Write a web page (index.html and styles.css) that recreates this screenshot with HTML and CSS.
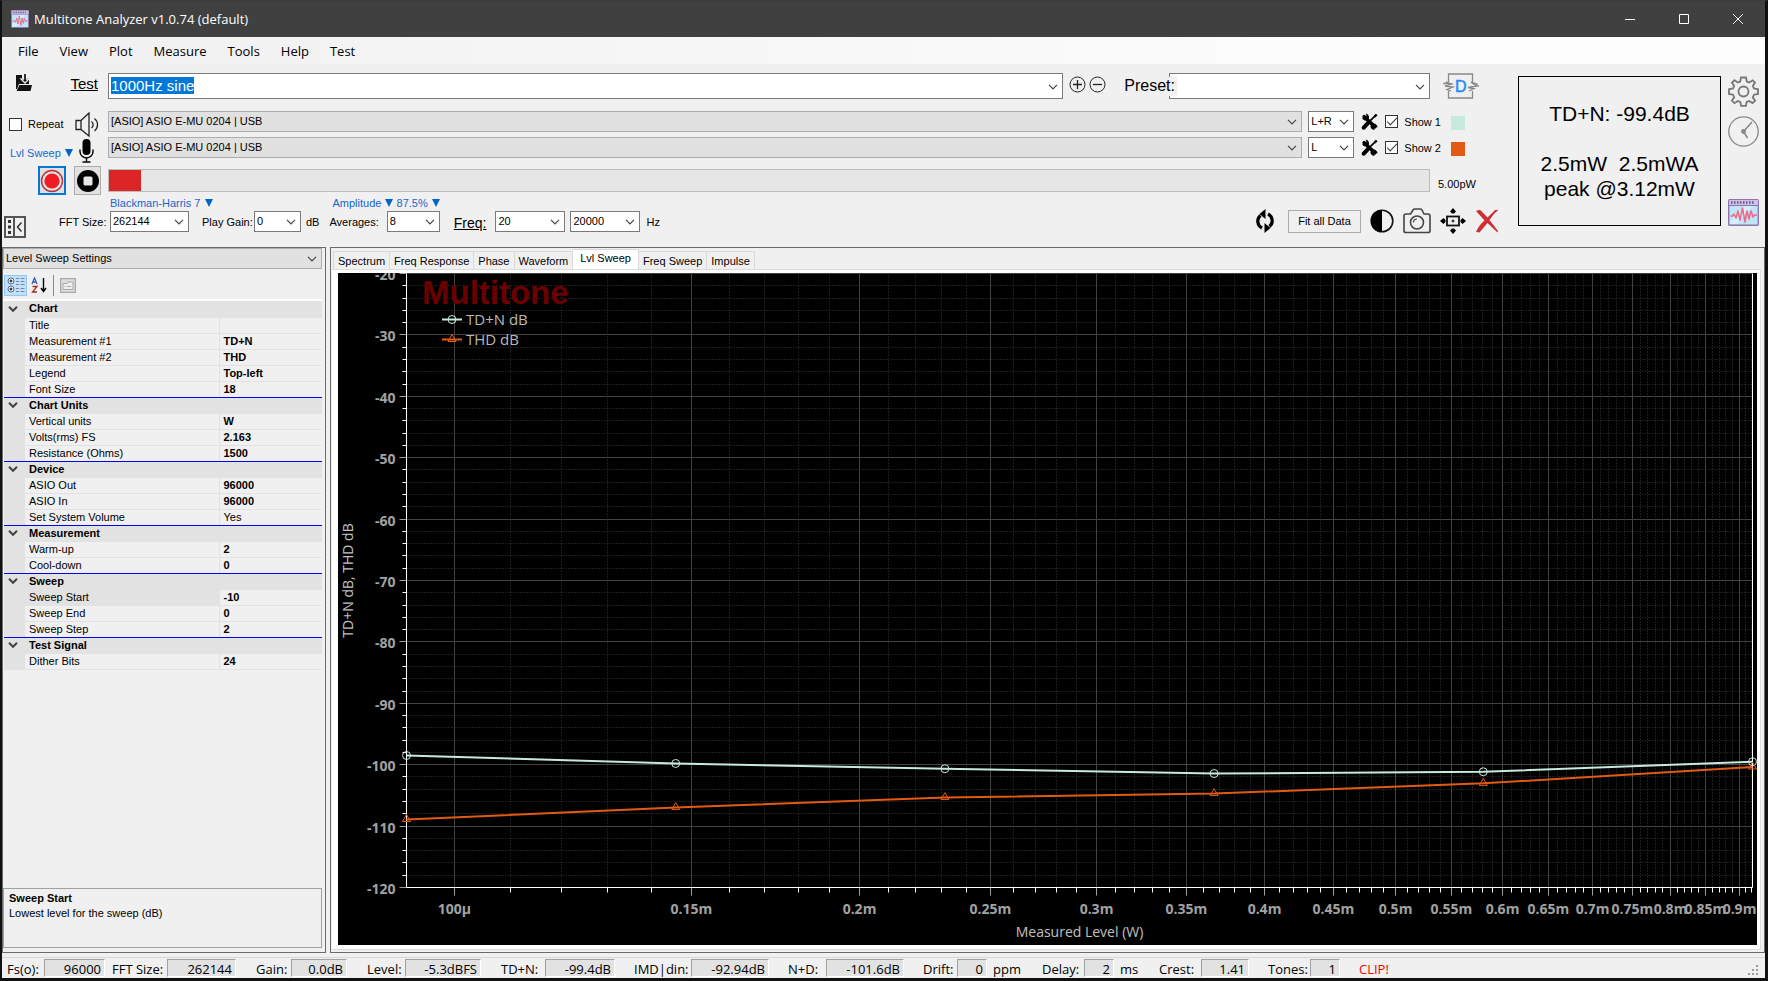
FILE: index.html
```html
<!DOCTYPE html>
<html lang="en">
<head>
<meta charset="utf-8">
<title>Multitone Analyzer v1.0.74 (default)</title>
<link rel="stylesheet" href="styles.css">
</head>
<body>
<svg width="0" height="0" class="defs">
  <symbol id="chev" viewBox="0 0 10 6"><path d="M1 .8 5 4.8 9 .8" fill="none" stroke="#444" stroke-width="1.2"/></symbol>
  <symbol id="chevb" viewBox="0 0 10 6"><path d="M1 .8 5 4.8 9 .8" fill="none" stroke="#444" stroke-width="2"/></symbol>
  <symbol id="tools" viewBox="0 0 16 16"><path d="M3 3.5 13 13" stroke="#000" stroke-width="3.4" stroke-linecap="round"/><path d="M1 4.500a3.600 3.600 0 0 0 6 1.500A3.600 3.600 0 0 0 4.500.5L5.200 3 3 4.800Z" fill="#000"/><path d="M11 10.200a3.400 3.400 0 0 1 4.500 3.500l-2.300-1-1.200 1.200 1 1.900a3.400 3.400 0 0 1-4-4Z" fill="#000"/><path d="M14.500 1.500 8.500 7.500" stroke="#000" stroke-width="1.600"/><path d="M14 .6 15.500 2 13.500 4.200 12 2.600Z" fill="#000"/><path d="M6.500 9.500 2.600 13.800" stroke="#000" stroke-width="3.800" stroke-linecap="round"/></symbol>
  <symbol id="scope" viewBox="0 0 31 27"><rect x=".7" y=".7" width="29.600" height="25.600" rx="1" fill="#bfe3f7" stroke="#8d76ab" stroke-width="1.400"/><path d="M2 22 18 6h7L9 25H2Z" fill="#d5eefb"/><path d="M1 1h29v5.500H1Z" fill="#cfc0e6"/><path d="M1 6.500h29" stroke="#8d76ab"/><path d="M3 3.500h24" stroke="#6c568f" stroke-width="2.400" stroke-dasharray="1.500 1.500"/><path d="M2.500 17h2l1.500-2 2 4 2-7 2 9 2.500-12 2.500 14 2-11 2 8 2-8 2 6 1.500-2H29" fill="none" stroke="#ea6a88" stroke-width="1.500" stroke-linejoin="round"/></symbol>
</svg>
<div class="window">
  <header class="titlebar">
    <svg class="appicon" viewBox="0 0 31 27" preserveAspectRatio="none"><use href="#scope"/></svg>
    <h1>Multitone Analyzer v1.0.74 (default)</h1>
    <button aria-label="Minimize"><svg width="10" height="10"><path d="M0 5.500h10" stroke="#fff"/></svg></button>
    <button aria-label="Maximize"><svg width="10" height="10"><path d="M.5.5h9v9h-9z" stroke="#fff" fill="none"/></svg></button>
    <button aria-label="Close"><svg width="10" height="10"><path d="M0 0 10 10M10 0 0 10" stroke="#fff"/></svg></button>
  </header>
  <nav class="menu">
    <button>File</button><button>View</button><button>Plot</button><button>Measure</button><button>Tools</button><button>Help</button><button>Test</button>
  </nav>

  <section class="toolbar">
    <div class="main">
      <div class="io">
        <div class="leftcol">
          <div class="l1">
            <button class="bare" aria-label="Open"><svg width="18" height="18" viewBox="0 0 18 18"><path d="M1 1h6v3h7v6H4l-2 5H1Z" fill="#111"/><path d="M4.500 11H17l-1.500 6H1.500Z" fill="#111"/><path d="M8.500 0v5H6l4 4 4-4h-2.500V0" fill="#111" stroke="#f0f0f0" stroke-width="1.300"/></svg></button>
            <a href="#test">Test</a>
          </div>
          <div class="l2">
            <label class="chk"><input type="checkbox"><span>Repeat</span></label>
            <svg width="25" height="25" viewBox="0 0 25 25" fill="none" stroke="#222" stroke-width="1.300"><path d="M1 8.500h5v9H1ZM6 8.500 14 1v23L6 17.500"/><path d="M16.500 9.500a4 4 0 0 1 0 6.500M19.500 6.500a8 8 0 0 1 0 12.500"/></svg>
          </div>
          <div class="l3">
            <button class="drop">Lvl Sweep <i></i></button>
            <svg width="15" height="24" viewBox="0 0 15 24"><rect x="3.500" y="0" width="8" height="16" rx="4"/><path d="M1 10.500v2a6.500 6.500 0 0 0 13 0v-2M7.500 19v4M3.500 23h8" fill="none" stroke="#000" stroke-width="1.400"/></svg>
          </div>
          <div class="l4">
            <button class="rec on" aria-label="Record"><svg width="24" height="24" viewBox="0 0 24 24"><circle cx="12" cy="12" r="10.500" fill="none" stroke="#b5333a" stroke-width="1.400"/><circle cx="12" cy="12" r="7.600" fill="#f01c22"/></svg></button>
            <button class="rec" aria-label="Stop"><svg width="24" height="24" viewBox="0 0 24 24"><circle cx="12" cy="12" r="11"/><rect x="7.500" y="7.500" width="9" height="9" rx="1.500" fill="#e8e8e8"/></svg></button>
          </div>
        </div>
        <div class="rightcol">
          <div class="r1">
            <span class="combo big grow"><input id="test" type="text" value="1000Hz sine" aria-label="Test"><svg><use href="#chev"/></svg></span>
            <button class="bare" aria-label="Add"><svg width="17" height="17" viewBox="0 0 17 17" fill="none" stroke="#222"><circle cx="8.500" cy="8.500" r="7.500"/><path d="M4 8.500h9M8.500 4v9" stroke-width="1.300"/></svg></button>
            <button class="bare" aria-label="Remove"><svg width="17" height="17" viewBox="0 0 17 17" fill="none" stroke="#222"><circle cx="8.500" cy="8.500" r="7.500"/><path d="M4 8.500h9" stroke-width="1.300"/></svg></button>
            <label class="preset" for="preset">Preset:</label>
            <span class="combo big wpreset"><select id="preset"><option></option></select><svg><use href="#chev"/></svg></span>
            <button class="bare dicon" aria-label="Distortion"><svg width="36" height="26" viewBox="0 0 36 26" fill="none" stroke="#888" stroke-width="1.300"><path d="M5.500 9V1h24v8M5.500 18v7h24v-7"/><path d="M0 10.500h5l-2-1.500 6 2-7 2 8 1-6 2.500 4 1.500M36 13h-4l2-2-6-2 5 4-8 1.500 6 1-5 2.500"/><text x="12" y="19" font-family="Liberation Sans" font-size="16" fill="#1e8bff" stroke="#1e8bff" stroke-width=".5">D</text></svg></button>
          </div>
          <div class="r2">
            <span class="combo grey grow"><select aria-label="Output device"><option>[ASIO] ASIO E-MU 0204 | USB</option></select><svg><use href="#chev"/></svg></span>
            <span class="combo w46"><select aria-label="Output channel"><option>L+R</option></select><svg><use href="#chev"/></svg></span>
            <button class="bare" aria-label="Output setup"><svg width="17" height="17"><use href="#tools"/></svg></button>
            <label class="chk"><input type="checkbox" checked><span>Show 1</span></label><span class="sw one"></span>
          </div>
          <div class="r2">
            <span class="combo grey grow"><select aria-label="Input device"><option>[ASIO] ASIO E-MU 0204 | USB</option></select><svg><use href="#chev"/></svg></span>
            <span class="combo w46"><select aria-label="Input channel"><option>L</option></select><svg><use href="#chev"/></svg></span>
            <button class="bare" aria-label="Input setup"><svg width="17" height="17"><use href="#tools"/></svg></button>
            <label class="chk"><input type="checkbox" checked><span>Show 2</span></label><span class="sw two"></span>
          </div>
          <div class="r4"><div class="meter"><div></div></div><span>5.00pW</span></div>
        </div>
      </div>
      <div class="fft">
        <button class="bare toggle" aria-label="Toggle panel"><svg width="22" height="22" viewBox="0 0 22 22" fill="none" stroke="#555" stroke-width="2"><path d="M1 1h20v20H1ZM10 1v20"/><path d="M5.500 4v14" stroke="#333" stroke-width="3" stroke-dasharray="3 2.500"/><path d="M17.500 6.500 13.500 11l4 4.500" stroke="#333" stroke-width="1.500"/></svg></button>
        <label for="size" class="lsize">FFT Size:</label>
        <div class="stack w79"><button class="drop">Blackman-Harris 7 <i></i></button><span class="combo w79"><select id="size"><option>262144</option></select><svg><use href="#chev"/></svg></span></div>
        <label for="gain" class="lgain">Play Gain:</label>
        <span class="combo w47"><select id="gain"><option>0</option></select><svg><use href="#chev"/></svg></span>
        <span class="db">dB</span>
        <div class="stack right"><div><button class="drop">Amplitude <i></i></button> <button class="drop">87.5% <i></i></button></div>
          <div class="avg"><label for="avg">Averages:</label><span class="combo w53"><select id="avg"><option>8</option></select><svg><use href="#chev"/></svg></span></div></div>
        <a href="#freq" class="freq">Freq:</a>
        <span class="combo w70"><select id="freq" aria-label="From"><option>20</option></select><svg><use href="#chev"/></svg></span>
        <span class="combo w70"><select aria-label="To"><option>20000</option></select><svg><use href="#chev"/></svg></span>
        <span class="hz">Hz</span>
        <div class="actions">
          <button class="bare" aria-label="Refresh"><svg width="20" height="24" viewBox="0 0 20 24" fill="none" stroke="#000" stroke-width="3.200"><path d="M7 19A7.500 7.500 0 0 1 5.500 6.500M13 5a7.500 7.500 0 0 1 1.500 12.500"/><path d="M10.500 0v10L4.500 5ZM9.500 14v10l6-5Z" fill="#000" stroke="none"/></svg></button>
          <button class="fit">Fit all Data</button>
          <button class="bare" aria-label="Contrast"><svg width="24" height="24" viewBox="0 0 24 24"><circle cx="12" cy="12" r="10.800" fill="none" stroke="#111" stroke-width="1.600"/><path d="M12 1a11 11 0 0 0 0 22Z"/></svg></button>
          <button class="bare" aria-label="Screenshot"><svg width="28" height="26" viewBox="0 0 28 26" fill="none" stroke="#444" stroke-width="1.600"><path d="M1 8q0-2 2-2h4.500L10 2q.5-1 2-1h5q1.500 0 2 1l2 4h4q2 0 2 2v15q0 1.500-2 1.500H3q-2 0-2-1.500Z"/><circle cx="14" cy="14.500" r="6.500"/><path d="M10.500 14.500a3.500 3.500 0 0 1 3.500-3.500" stroke-width="1.200"/></svg></button>
          <button class="bare" aria-label="Move"><svg width="26" height="26" viewBox="0 0 26 26"><rect x="7" y="8.500" width="12" height="9" fill="none" stroke="#111" stroke-width="1.800"/><path d="M13 0 16 3.500 14 5.500h-2L10 3.500ZM13 26l3-3.500-2-2h-2l-2 2ZM0 13l3.500-3 2 2v2l-2 2ZM26 13l-3.500-3-2 2v2l2 2ZM11.500 12.500h3v1h-3ZM12.500 11.500h1v3h-1Z"/></svg></button>
          <button class="bare" aria-label="Delete"><svg width="24" height="24" viewBox="0 0 24 24"><path d="M1 2 5 .8 12.500 8.500 20 1 23.500.8Q18 5 14.500 11L23 22l-.5 1.500L12.500 14 4.500 23.500 1 23Q4 16 9.500 11.500Z" fill="#cf2f33"/></svg></button>
        </div>
      </div>
    </div>
    <output class="readout"><span>TD+N: -99.4dB</span><span>&nbsp;</span><span>2.5mW&nbsp; 2.5mWA</span><span>peak @3.12mW</span></output>
    <div class="side">
      <button class="bare" aria-label="Settings"><svg id="gear" width="31" height="31" viewBox="0 0 31 31" fill="none" stroke="#777" stroke-width="1.800"><path d="M13 1.500h5l.8 4 2.500 1L24.700 4.300 27 6.600 24.800 10l1.200 2.500 4 .8v4.600l-4 .8-1.200 2.600 2.300 3.400-2.600 2.400-3.400-2.200-2.400 1-.8 4h-4.800l-.8-4-2.500-1-3.400 2.300-2.500-2.500L6.200 21.300 5 18.700l-4-.8v-4.600l4-.8L6.200 10 4 6.600l2.400-2.400 3.400 2.300 2.400-1Z"/><circle cx="15.500" cy="15.500" r="5"/></svg></button>
      <button class="bare" aria-label="History"><svg width="31" height="31" viewBox="0 0 31 31" fill="none" stroke="#888" stroke-width="1.300"><circle cx="15.500" cy="15.500" r="14.700"/><path d="M24 6 15.500 15.500 19.500 22" stroke-width="1.600"/><circle cx="15.500" cy="15.500" r="1.800" fill="#888"/></svg></button>
      <button class="bare last" aria-label="Scope"><svg width="31" height="27"><use href="#scope"/></svg></button>
    </div>
  </section>

  <main class="panes">
    <aside class="props">
      <span class="combo grey full"><select aria-label="Settings page"><option>Level Sweep Settings</option></select><svg><use href="#chev"/></svg></span>
      <div class="ptools">
        <button class="pt on" aria-label="Categorized"><svg width="18" height="16" viewBox="0 0 18 16"><g fill="#fff" stroke="#456a9c"><circle cx="4" cy="4" r="3"/><circle cx="4" cy="12" r="3"/></g><path d="M2.500 4h3M4 2.500v3M2.500 12h3M4 10.500v3" stroke="#000"/><path d="M9 1.500h3M9 4.500h3M9 7.500h3M9 11.500h3M9 14.500h3M13.500 1.500h4M13.500 4.500h4M13.500 7.500h4M13.500 11.500h4M13.500 14.500h4" stroke="#7287ad"/></svg></button>
        <button class="pt" aria-label="Alphabetical"><svg width="16" height="16" viewBox="0 0 16 16" fill="none"><path d="M1 7 3.500 1 6 7M2 5h3" stroke="#3459b5" stroke-width="1.300"/><path d="M1.500 9.500h4.500L1.500 15H6" stroke="#a82a2a" stroke-width="1.300"/><path d="M12.500 1v13M10 11l2.500 3.500L15 11" stroke="#000" stroke-width="1.400"/></svg></button>
        <span class="sep"></span>
        <button class="pt" aria-label="Property pages" disabled><svg width="16" height="15" viewBox="0 0 16 15" fill="none" stroke="#aaa"><rect x=".5" y=".5" width="15" height="14" fill="#ddd" stroke-width="1.500"/><path d="M3 5.500h4l1-1.500h5v7.500H3ZM4.500 8.500h1M7 8.500h4" fill="#eee"/></svg></button>
      </div>
      <div class="gridwrap">
        <table class="grid">
          <colgroup><col class="c1"><col class="c2"><col></colgroup>
          <tbody>
          <tr class="cat"><td><svg><use href="#chevb"/></svg></td><th colspan="2">Chart</th></tr>
          <tr><td></td><td>Title</td><td></td></tr>
          <tr><td></td><td>Measurement #1</td><td>TD+N</td></tr>
          <tr><td></td><td>Measurement #2</td><td>THD</td></tr>
          <tr><td></td><td>Legend</td><td>Top-left</td></tr>
          <tr><td></td><td>Font Size</td><td>18</td></tr>
          <tr class="cat"><td><svg><use href="#chevb"/></svg></td><th colspan="2">Chart Units</th></tr>
          <tr><td></td><td>Vertical units</td><td>W</td></tr>
          <tr><td></td><td>Volts(rms) FS</td><td>2.163</td></tr>
          <tr><td></td><td>Resistance (Ohms)</td><td>1500</td></tr>
          <tr class="cat"><td><svg><use href="#chevb"/></svg></td><th colspan="2">Device</th></tr>
          <tr><td></td><td>ASIO Out</td><td>96000</td></tr>
          <tr><td></td><td>ASIO In</td><td>96000</td></tr>
          <tr><td></td><td>Set System Volume</td><td class="def">Yes</td></tr>
          <tr class="cat"><td><svg><use href="#chevb"/></svg></td><th colspan="2">Measurement</th></tr>
          <tr><td></td><td>Warm-up</td><td>2</td></tr>
          <tr><td></td><td>Cool-down</td><td>0</td></tr>
          <tr class="cat"><td><svg><use href="#chevb"/></svg></td><th colspan="2">Sweep</th></tr>
          <tr class="sel"><td></td><td>Sweep Start</td><td>-10</td></tr>
          <tr><td></td><td>Sweep End</td><td>0</td></tr>
          <tr><td></td><td>Sweep Step</td><td>2</td></tr>
          <tr class="cat"><td><svg><use href="#chevb"/></svg></td><th colspan="2">Test Signal</th></tr>
          <tr><td></td><td>Dither Bits</td><td>24</td></tr>
          </tbody>
        </table>
      </div>
      <div class="help"><strong>Sweep Start</strong><p>Lowest level for the sweep (dB)</p></div>
    </aside>
    <section class="view">
      <div class="tabs" role="tablist">
        <button role="tab">Spectrum</button><button role="tab">Freq Response</button><button role="tab">Phase</button><button role="tab">Waveform</button><button role="tab" class="active">Lvl Sweep</button><button role="tab">Freq Sweep</button><button role="tab">Impulse</button>
      </div>
      <div class="page"><div class="plot"><svg id="chart"></svg></div></div>
    </section>
  </main>

  <footer class="status">
    <span class="f1">Fs(o):</span><output class="w61">96000</output>
    <span class="f2">FFT Size:</span><output class="w69">262144</output>
    <span class="f3">Gain:</span><output class="w56">0.0dB</output>
    <span class="f4">Level:</span><output class="w76">-5.3dBFS</output>
    <span class="f5">TD+N:</span><output class="w70">-99.4dB</output>
    <span class="f6 n57">IMD|din:</span><output class="w78">-92.94dB</output>
    <span class="f6 n38">N+D:</span><output class="w78">-101.6dB</output>
    <span class="f6 n34">Drift:</span><output class="w30">0</output><span class="unit n30">ppm</span>
    <span class="f6 n42">Delay:</span><output class="w30">2</output><span class="unit n20">ms</span>
    <span class="f6 n42">Crest:</span><output class="w48">1.41</output>
    <span class="f6 n42">Tones:</span><output class="w30">1</output>
    <span class="clip">CLIP!</span>
    <svg class="grip" width="12" height="12" fill="#999"><path d="M8 0h2v2H8zM8 4h2v2H8zM8 8h2v2H8zM4 4h2v2H4zM4 8h2v2H4zM0 8h2v2H0z"/></svg>
  </footer>
</div>
<script src="chart.js"></script>
</body>
</html>
```
FILE: styles.css
```css
* { box-sizing: border-box; }
body { margin: 0; background: #0c0c0e; color: #000; font: 11px/14px "Liberation Sans", sans-serif; }
.defs { position: absolute; }
svg { display: block; flex: none; }
button, input, select { font: inherit; color: inherit; margin: 0; }
a { color: inherit; }
.window { min-height: 100vh; display: flex; flex-direction: column; background: #f0f0f0; border: 1px solid #3c3c3c; border-width: 1px 3px 3px 2px; border-color: #3c3c3c #111 #111 #111; }

.titlebar { height: 36px; background: #404040; color: #fff; display: flex; align-items: center; padding-left: 9px; }
.appicon { width: 18px; height: 18px; }
.titlebar h1 { flex: 1; margin: 0 0 0 5px; font: 13px/20px "Open Sans", sans-serif; }
.titlebar button { width: 54px; height: 36px; border: 0; background: none; display: flex; align-items: center; justify-content: center; padding: 0; }

.menu { height: 27px; display: flex; align-items: center; gap: 1px; padding-left: 6px; background: linear-gradient(90deg, #f0f0f0, #fdfdfd 80%); }
.menu button { border: 0; background: none; padding: 0 10px; font: 13px/20px "Open Sans", sans-serif; }

.toolbar { height: 183px; display: flex; }
.main { flex: 1; min-width: 0; display: flex; flex-direction: column; }
.bare { border: 0; background: none; padding: 0; display: flex; }
.io { display: flex; padding: 9px 18px 0 0; }
.leftcol { width: 106px; flex: none; display: flex; flex-direction: column; }
.l1 { height: 26px; display: flex; justify-content: space-between; padding: 1px 10px 0 13px; }
.l1 a { font-size: 15px; line-height: 20px; }
.l2 { height: 38px; display: flex; align-items: flex-end; justify-content: space-between; padding: 0 8px 0 7px; }
.l2 .chk { padding-bottom: 6px; }
.l3 { height: 26px; display: flex; align-items: center; justify-content: space-between; padding: 1px 14px 0 8px; }
.l3 .drop { padding-top: 4px; }
.l4 { height: 32px; display: flex; gap: 8px; padding: 3px 0 0 36px; }
.rec { width: 27px; height: 29px; border: 1px solid #adadad; background: #e1e1e1; padding: 0; display: flex; align-items: center; justify-content: center; }
.rec.on { border: 2px solid #0078d7; width: 28px; }
.drop { border: 0; background: none; padding: 0; color: #1a66cc; line-height: 14px; white-space: nowrap; }
.drop i { display: inline-block; border: 4px solid transparent; border-top: 8px solid #0066cc; border-bottom: 0; margin-left: 1px; }
.chk { display: flex; align-items: center; gap: 6px; white-space: nowrap; }
.chk input { appearance: none; width: 13px; height: 13px; border: 1px solid #333; background: #fff; display: grid; place-items: center; }
.chk input:checked::after { content: ""; width: 9px; height: 4px; border: solid #333; border-width: 0 0 1px 1px; transform: rotate(-45deg) translate(1px, -1px); }

.rightcol { flex: 1; min-width: 0; display: flex; flex-direction: column; }
.combo { position: relative; display: flex; height: 21px; flex: none; }
.combo select, .combo input { appearance: none; flex: 1; min-width: 0; width: 100%; border: 1px solid #7a7a7a; border-radius: 0; background: #fff; padding: 0 2px 1px; outline: none; }
.combo svg { position: absolute; right: 5px; top: 8px; width: 10px; height: 6px; pointer-events: none; }
.combo.grey select { background: #e1e1e1; border-color: #adadad; }
.combo.big { height: 26px; font-size: 15px; }
.combo.big svg { top: 11px; }
.combo.grow { flex: 1; min-width: 0; }
.combo input::selection { background: #0078d7; color: #fff; }
.wpreset { width: 261px; }
.w46 { width: 46px; } .w47 { width: 47px; } .w53 { width: 53px; } .w70 { width: 70px; } .w79 { width: 79px; }
.r1 { display: flex; height: 26px; margin-bottom: 12px; }
.r1 > .bare:not(.dicon) { padding: 3px 0 0 3px; }
.r1 > .grow + .bare { margin-left: 3px; }
.preset { z-index: 1; font-size: 16px; line-height: 18px; height: 19px; background: #f0f0f0; margin: 4px -8px 0 18px; padding-right: 2px; }
.dicon { margin-left: 13px; width: 57px; }
.r2 { display: flex; align-items: center; gap: 6px; height: 21px; margin-bottom: 5px; }
.r2 .bare { margin: 0 1px; }
.sw { width: 14px; height: 14px; margin: 3px 35px 0 4px; }
.one { background: #c6eadf; } .two { background: #e25a14; }
.r4 { display: flex; height: 23px; margin-top: 6px; align-items: flex-end; }
.meter { flex: 1; height: 23px; border: 1px solid #bcbcbc; background: #e6e6e6; }
.meter div { width: 32px; height: 21px; background: #dc2626; }
.r4 span { width: 70px; padding-left: 8px; line-height: 16px; }

.fft { display: flex; align-items: flex-end; height: 44px; padding-left: 2px; }
.fft > .toggle { margin-bottom: 1px; }
.fft .combo { margin-bottom: 7px; }
.fft > label, .fft > span:not(.combo), .avg label { line-height: 14px; margin-bottom: 10px; white-space: nowrap; }
.toggle { width: 24px; }
.lsize { width: 51px; margin-left: 31px; }
.stack { display: flex; flex-direction: column; align-items: flex-start; flex: none; }
.stack .drop { margin-bottom: 1px; }
.stack.right { align-items: flex-end; }
.lgain { width: 52px; margin-left: 13px; }
.db { margin: 0 10px 0 5px; }
.avg { display: flex; align-items: flex-end; gap: 8px; }
.freq { font-size: 14px; line-height: 18px; margin: 0 9px 7px 14px; }
.w70 + .w70 { margin-left: 5px; }
.hz { margin-left: 6px; }
.actions { margin-left: auto; display: flex; align-items: center; gap: 9px; height: 26px; padding-right: 19px; margin-bottom: 5px; }
.fit { width: 73px; height: 23px; border: 1px solid #adadad; background: #f0f0f0; padding: 0; margin-left: 4px; }
.readout { width: 203px; height: 150px; margin-top: 12px; border: 1px solid #000; display: flex; flex-direction: column; align-items: center; justify-content: center; font-size: 21px; line-height: 25px; flex: none; }
.side { width: 44px; flex: none; padding: 12px 0 0 7px; display: flex; flex-direction: column; gap: 9px; }
.side .last { margin-top: 43px; }

.panes { flex: 1; display: flex; gap: 4px; min-height: 0; }
.props { width: 324px; flex: none; border: 1px solid #6a6a6a; display: flex; flex-direction: column; padding: 0 3px 4px 0; }
.full { width: 100%; }
.ptools { height: 32px; display: flex; align-items: center; padding: 2px 0 0 1px; border-bottom: 2px solid #fff; }
.pt { border: 1px solid transparent; background: none; width: 23px; height: 21px; padding: 0; display: grid; place-items: center; }
.pt.on { background: #c4e0f7; border-color: #90c8f6; }
.sep { width: 1px; height: 21px; background: #888; margin: 0 2px 0 3px; }
.gridwrap { flex: 1; padding-left: 1px; }
.grid { width: 100%; border-collapse: collapse; table-layout: fixed; line-height: 15px; }
.c1 { width: 21px; } .c2 { width: 194px; }
.grid td, .grid th { padding: 0 0 0 4px; height: 16px; text-align: left; white-space: nowrap; border: 0 solid #e2e2e2; border-bottom-width: 1px; }
.grid td:first-child { background: #e2e2e2; }
.grid td:nth-child(3) { border-left-width: 1px; font-weight: bold; }
.grid th { background: #e2e2e2; }
.grid tr:has(+ .cat) > * { border-bottom-color: #0000f0; }
.grid td.def { font-weight: normal; }
.grid .sel td:nth-child(2) { background: #e2e2e2; }
.grid svg { width: 10px; height: 6px; }
.help { height: 60px; border: 1px solid #a0a0a0; padding: 2px 5px; line-height: 15px; }
.help p { margin: 0; }

.view { flex: 1; min-width: 0; border: 1px solid #6a6a6a; display: flex; flex-direction: column; padding: 1px 3px 2px 1px; }
.tabs { height: 20px; display: flex; align-items: flex-end; padding-left: 1px; }
.tabs button { height: 18px; border: 1px solid #d9d9d9; border-bottom: 0; border-left-width: 0; background: #f0f0f0; padding: 0 4px; line-height: 16px; white-space: nowrap; }
.tabs button:first-child { border-left-width: 1px; }
.tabs .active { height: 20px; background: #fff; padding: 0 7px 3px; }
.page { flex: 1; background: #fff; border: 1px solid #dcdcdc; border-left: 0; padding: 3px 3px 4px 6px; display: flex; min-height: 0; }
.plot { flex: 1; min-width: 0; background: #000; overflow: hidden; position: relative; }
#chart { position: absolute; inset: 0; width: 100%; height: 100%; font-family: "Open Sans", sans-serif; }
.major { stroke: #424242; } .minor { stroke: #3a3a3a; stroke-dasharray: 1 2; }
.axis { stroke: #fff; fill: none; } .gtick { stroke: #a0a0a0; }
.tick { fill: #a2a2a2; font-size: 14px; font-weight: bold; }
.name { fill: #c0c0c0; font-size: 14px; }
.leg { fill: #b8b8b8; font-size: 15px; }
.brand { fill: #6a0000; font: bold 33px "Liberation Sans", sans-serif; }
.s0 { stroke: #c6eadf; } .s1 { stroke: #e25a14; }
.line { fill: none; stroke-width: 2; } .mark { fill: none; stroke-width: 1; }

.status { height: 21px; display: flex; align-items: flex-start; margin-top: 4px; border-top: 1px solid #d8d8d8; padding: 1px 5px 0; font: 13px/18px "Open Sans", sans-serif; white-space: nowrap; }
.status span { flex: none; padding-top: 1px; height: 18px; }
.status output { height: 18px; flex: none; border: 1px solid #a0a0a0; border-color: #a0a0a0 #fff #fff #a0a0a0; background: #e2e2e2; text-align: right; padding: 0 3px; }
.f1 { width: 37px; } .f2 { width: 55px; margin-left: 7px; } .f3 { width: 35px; margin-left: 20px; } .f4 { width: 38px; margin-left: 20px; } .f5 { width: 44px; margin-left: 20px; }
.f6 { margin-left: 19px; }
.n20 { width: 20px; } .n30 { width: 30px; } .n34 { width: 34px; } .n38 { width: 38px; } .n42 { width: 42px; } .n57 { width: 57px; }
.w30 { width: 30px; } .w48 { width: 48px; } .w56 { width: 56px; } .w61 { width: 61px; } .w69 { width: 69px; } .w76 { width: 76px; } .w78 { width: 78px; }
.unit { margin-left: 6px; }
.clip { color: #f00; margin-left: 19px; }
.grip { margin: 6px 0 0 auto; }
```
FILE: chart.js
```js
const svg = document.getElementById('chart');
const levels = [0.0921, 0.14597, 0.23134, 0.36665, 0.58110, 0.92099];
const series = [
  { name: 'TD+N dB', y: [-98.5, -99.8, -100.66, -101.44, -101.15, -99.52] },
  { name: 'THD dB', y: [-108.93, -106.98, -105.35, -104.7, -103.04, -100.38] }
];

function mark(i, x, y) {
  return i === 0
    ? `<circle class="mark s0" cx="${x}" cy="${y}" r="4"/>`
    : `<path class="mark s1" d="M${x - 4} ${y + 2}L${x} ${y - 5}L${x + 4} ${y + 2}Z"/>`;
}

function draw() {
  const w = svg.clientWidth, h = svg.clientHeight;
  const L = 68.5, R = w - 4.5, T = 0.5, B = h - 57.5;
  const lo = Math.log(levels[0]), hi = Math.log(levels[5]);
  const X = v => L + (Math.log(v) - lo) / (hi - lo) * (R - L);
  const Y = v => T + (-20 - v) / 100 * (B - T);
  const snap = v => Math.floor(v) + 0.5;
  let grid = '', over = '';
  for (let v = -20; v >= -120; v -= 2) {
    const y = snap(Y(v)), major = v % 10 === 0;
    if (v > -120) grid += `<path class="${major ? 'major' : 'minor'}" d="M${L} ${y}H${R}"/>`;
    over += `<path class="${major ? 'gtick' : 'axis'}" d="M${L - (major ? 7 : 4)} ${y}H${L}"/>`;
    if (major) over += `<text class="tick" text-anchor="end" x="${L - 11}" y="${y + 6}">${v}</text>`;
  }
  for (let k = 10; k <= 92; k++) {
    const x = snap(X(k / 100)), major = k % 5 === 0;
    grid += `<path class="${major ? 'major' : 'minor'}" d="M${x} ${T}V${B}"/>`;
    over += `<path class="${major ? 'gtick' : 'axis'}" d="M${x} ${B}v${major ? 8 : 5}"/>`;
    if (major) over += `<text class="tick" text-anchor="middle" x="${x}" y="${B + 26}">${k === 10 ? '100µ' : k / 100 + 'm'}</text>`;
  }
  over += `<path class="axis" d="M${L} ${T}V${B}H${R}V${T}"/>`;
  over += `<text class="name" text-anchor="middle" x="${(L + R) / 2}" y="${B + 49}">Measured Level (W)</text>`;
  over += `<text class="name" text-anchor="middle" transform="translate(15 ${(T + B) / 2})rotate(-90)">TD+N dB, THD dB</text>`;
  over += '<text class="brand" x="84" y="31">Multitone</text>';
  series.forEach((s, i) => {
    const pts = s.y.map((v, j) => [X(levels[j]), Y(v)]);
    over += `<polyline class="line s${i}" points="${pts.join(' ')}"/>` + pts.map(p => mark(i, p[0], p[1])).join('');
    const y = 46.5 + 20 * i;
    over += `<path class="line s${i}" d="M104 ${y}h20"/>${mark(i, 114, y)}<text class="leg" x="128" y="${y + 5}">${s.name}</text>`;
  });
  svg.innerHTML = grid + over;
}
draw();
window.addEventListener('resize', draw);
const test = document.getElementById('test');
test.focus();
test.select();
```
